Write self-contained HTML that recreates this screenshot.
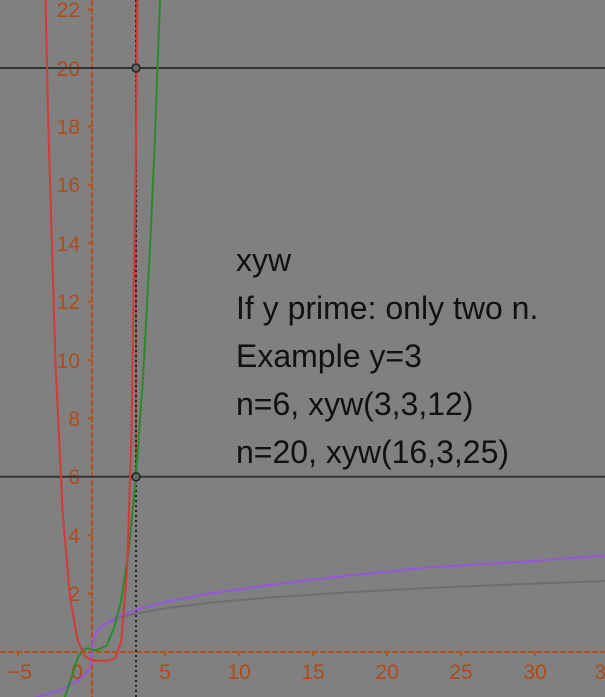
<!DOCTYPE html>
<html><head><meta charset="utf-8"><style>
html,body{margin:0;padding:0;background:#808080;}
svg{display:block}
text{font-family:"Liberation Sans",sans-serif}
</style></head><body>
<svg width="605" height="697" viewBox="0 0 605 697" xmlns="http://www.w3.org/2000/svg">
<rect width="605" height="697" fill="#808080"/>
<line x1="92" y1="0" x2="92" y2="697" stroke="#b4521c" stroke-width="2" stroke-dasharray="6,2"/>
<line x1="0" y1="652" x2="605" y2="652" stroke="#b4521c" stroke-width="2" stroke-dasharray="6,2"/>
<g stroke="#b4521c" stroke-width="2">
<path d="M88 9.6h4M88 68h4M88 126.4h4M88 184.8h4M88 243.2h4M88 301.6h4M88 360h4M88 418.4h4M88 476.8h4M88 535.2h4M88 593.6h4"/>
<path d="M18 652v4M165 652v4M239 652v4M313 652v4M387 652v4M461 652v4M535 652v4"/>
</g>
<g fill="#b04a18" font-size="21" text-anchor="end">
<text x="80" y="17">22</text><text x="80" y="76">20</text><text x="80" y="134">18</text>
<text x="80" y="192">16</text><text x="80" y="251">14</text><text x="80" y="309">12</text>
<text x="80" y="368">10</text><text x="80" y="426">8</text><text x="80" y="484">6</text>
<text x="80" y="543">4</text><text x="80" y="601">2</text>
</g>
<g fill="#b04a18" font-size="21" text-anchor="middle">
<text x="20" y="679">−5</text><text x="77" y="679">0</text><text x="165" y="679">5</text>
<text x="239" y="679">10</text><text x="313" y="679">15</text><text x="387" y="679">20</text>
<text x="461" y="679">25</text><text x="535" y="679">30</text><text x="606" y="679">35</text>
</g>
<line x1="0" y1="68" x2="605" y2="68" stroke="#333" stroke-width="2"/>
<line x1="0" y1="476.8" x2="605" y2="476.8" stroke="#333" stroke-width="2"/>
<line x1="136" y1="0" x2="136" y2="697" stroke="#222" stroke-width="2" stroke-dasharray="2,3"/>
<line x1="136" y1="0" x2="136" y2="470" stroke="#c03030" stroke-width="2" stroke-dasharray="2,3" stroke-dashoffset="2.5"/>
<g fill="none" stroke-width="2" stroke-linejoin="round">
<polyline stroke="#6e6e6e" points="106.6,622.8 121.2,617.3 135.8,613.6 165,608.3 208.8,602.9 267.2,597.7 340.2,592.7 427.8,588 530,583.7 617.6,580.5"/>
<polyline stroke="#9a55e0" points="19,702 48.2,694.1 62.8,688.8 77.4,681.2 84.7,675.2 89.1,669.1 91.3,662.7 92,652 92.7,641.3 94.9,634.9 99.3,628.8 106.6,622.8 121.2,615.2 135.8,609.9 165,602 208.8,593.6 267.2,585.3 340.2,576.4 427.8,567.4 530,561.3 603,555.5 617.6,554.5"/>
<polyline stroke="#2a8a2a" points="62.8,703 70,682 77.4,658.4 83,650 88,648 92,650 97,650 106.6,645.6 114,628 121.2,600.6 128.5,551.6 135.8,478.5 143.1,376.6 150.4,240.9 154.8,141 160.6,-14"/>
<polyline stroke="#d43a3a" points="43.8,-81 48.2,120.6 55.5,363 62.8,514.8 70.1,598 77.4,639.7 84.7,656 92,660.4 100.8,660.8 109.5,660.5 115.4,658 121.2,641 127,571 131.4,436 135.8,158 137.3,10 137.6,-10"/>
</g>
<circle cx="136" cy="68" r="4" fill="#666" stroke="#222" stroke-width="1.5"/>
<circle cx="136" cy="476.8" r="4" fill="#666" stroke="#222" stroke-width="1.5"/>
<g fill="#111" font-size="32">
<text x="236" y="271">xyw</text>
<text x="236" y="319">If y prime: only two n.</text>
<text x="236" y="367">Example y=3</text>
<text x="236" y="415">n=6, xyw(3,3,12)</text>
<text x="236" y="463">n=20, xyw(16,3,25)</text>
</g>
</svg>
</body></html>
